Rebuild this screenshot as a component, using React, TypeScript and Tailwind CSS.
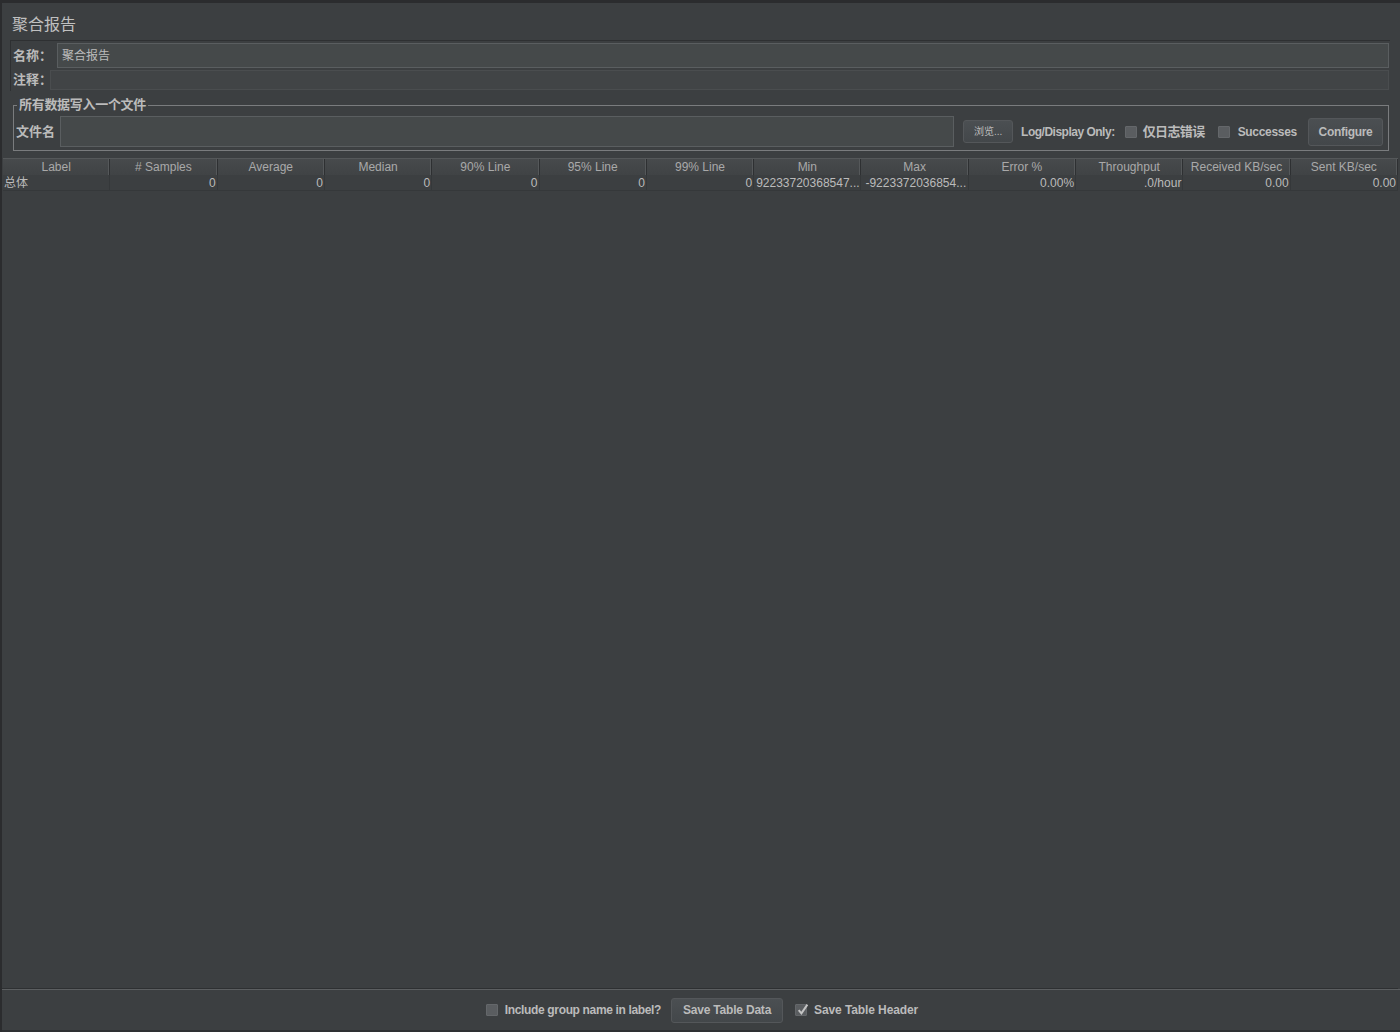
import React from "react";

const cols = [
  "Label",
  "# Samples",
  "Average",
  "Median",
  "90% Line",
  "95% Line",
  "99% Line",
  "Min",
  "Max",
  "Error %",
  "Throughput",
  "Received KB/sec",
  "Sent KB/sec",
];

const row = [
  "总体",
  "0",
  "0",
  "0",
  "0",
  "0",
  "0",
  "92233720368547...",
  "-9223372036854...",
  "0.00%",
  ".0/hour",
  "0.00",
  "0.00",
];

const font = "font-['Liberation_Sans','Noto_Sans_CJK_SC',sans-serif]";

function CheckBox({ checked }: { checked?: boolean }) {
  return (
    <span className="relative inline-block shrink-0 w-[12px] h-[12px] bg-[#5a5d60] border border-[#64676a] rounded-[1px]">
      {checked && (
        <svg viewBox="0 0 12 12" className="absolute -top-[2px] left-[0px] w-[13px] h-[13px]">
          <path d="M2.5 6.5 L5 9.5 L10.5 1.5" fill="none" stroke="#c4c4c4" strokeWidth="1.8" />
        </svg>
      )}
    </span>
  );
}

function Btn({ children, className }: { children: React.ReactNode; className?: string }) {
  return (
    <div
      className={
        "shrink-0 whitespace-nowrap flex items-center justify-center rounded-[3px] border border-[#54575a] bg-gradient-to-b from-[#4b4f52] to-[#43474a] text-[#bbbbbb] " +
        (className ?? "")
      }
    >
      {children}
    </div>
  );
}

export default function App() {
  return (
    <div
      className={
        "w-[1400px] h-[1032px] bg-[#3c3f41] border-t-[3px] border-l-[2px] border-[#2b2c2e] flex flex-col text-[#bbbbbb] whitespace-nowrap " +
        font
      }
    >
      <div className="h-[37px] pl-[10px] pt-[11px] text-[16px] leading-[22px] text-[#c0c0c0]">聚合报告</div>

      <div className="ml-[8px] mr-[10px] h-[51px] border-t border-l border-[#2e3032] border-b-[#5a5d5f] flex flex-col">
        <div className="flex items-center h-[27px] pt-[2px]">
          <span className="w-[46px] shrink-0 pl-[2px] text-[13px] font-bold">名称：</span>
          <div className="flex-1 h-[25px] mr-[1px] bg-[#45494a] border border-[#5a5e60] flex items-center pl-[4px] text-[12px] text-[#bbbbbb]">
            聚合报告
          </div>
        </div>
        <div className="flex items-center h-[22px] mt-[1px]">
          <span className="w-[39px] shrink-0 pl-[2px] text-[13px] font-bold">注释：</span>
          <div className="flex-1 h-[20px] mr-[1px] bg-[#414446] border border-[#4a4d4f]" />
        </div>
      </div>

      <div className="relative ml-[11px] mr-[11px] mt-[14px] h-[46px] pt-[7px] pr-[5px] border border-[#7a7c7e] flex items-center">
        <span className="absolute -top-[10px] left-[3px] px-[2px] bg-[#3c3f41] text-[13px] font-bold leading-[18px] tracking-[-0.3px]">
          所有数据写入一个文件
        </span>
        <span className="w-[46px] shrink-0 pl-[2px] text-[13px] font-bold">文件名</span>
        <div className="flex-1 h-[31px] bg-[#45494a] border border-[#5a5e60]" />
        <Btn className="ml-[9px] w-[50px] h-[23px] text-[10px] text-[#8e9092]">浏览...</Btn>
        <span className="ml-[8px] shrink-0 text-[12px] font-bold tracking-[-0.5px]">Log/Display Only:</span>
        <span className="ml-[10px] flex items-center">
          <CheckBox />
        </span>
        <span className="ml-[6px] shrink-0 text-[13px] font-bold tracking-[-0.6px]">仅日志错误</span>
        <span className="ml-[13px] flex items-center">
          <CheckBox />
        </span>
        <span className="ml-[8px] shrink-0 text-[12px] font-bold tracking-[-0.3px]">Successes</span>
        <Btn className="ml-[11px] w-[75px] h-[28px] text-[12px] font-bold tracking-[-0.3px]">Configure</Btn>
      </div>

      <div className="flex-1 mt-[7px] mr-[2px] flex flex-col border-b border-[#2e3032]">
        <div className="grid grid-cols-[repeat(13,minmax(0,1fr))] ml-[1px] h-[17px] bg-gradient-to-b from-[#474a4c] to-[#404345] border-t border-[#55585a]">
          {cols.map((c) => (
            <div
              key={c}
              className="flex items-center justify-center text-[12px] text-[#a9a9a9] border-r border-[#2e3032] shadow-[inset_-1px_0_0_#55585a] leading-none"
            >
              {c}
            </div>
          ))}
        </div>
        <div className="grid grid-cols-[repeat(13,minmax(0,1fr))] ml-[1px] h-[16px]">
          {row.map((v, i) => (
            <div
              key={i}
              className={
                "flex items-center text-[12px] leading-none overflow-hidden border-r border-b border-[#35383a] " +
                (i === 0
                  ? "justify-start pl-[1px]"
                  : i === 7
                  ? "justify-start pl-[2px]"
                  : i === 8
                  ? "justify-start pl-[4px]"
                  : "justify-end pr-[1px]")
              }
            >
              {v}
            </div>
          ))}
        </div>
      </div>

      <div className="h-[43px] border-t border-[#5c5f61] border-b-[2px] border-b-[#2e3032] flex items-center justify-center">
        <div className="flex items-center ml-[2px]">
          <CheckBox />
          <span className="ml-[7px] text-[12px] font-bold tracking-[-0.35px]">Include group name in label?</span>
          <Btn className="ml-[10px] w-[112px] h-[25px] text-[12px] font-bold tracking-[-0.2px]">Save Table Data</Btn>
          <span className="ml-[12px] flex items-center">
            <CheckBox checked />
          </span>
          <span className="ml-[7px] text-[12px] font-bold tracking-[-0.1px]">Save Table Header</span>
        </div>
      </div>
    </div>
  );
}
